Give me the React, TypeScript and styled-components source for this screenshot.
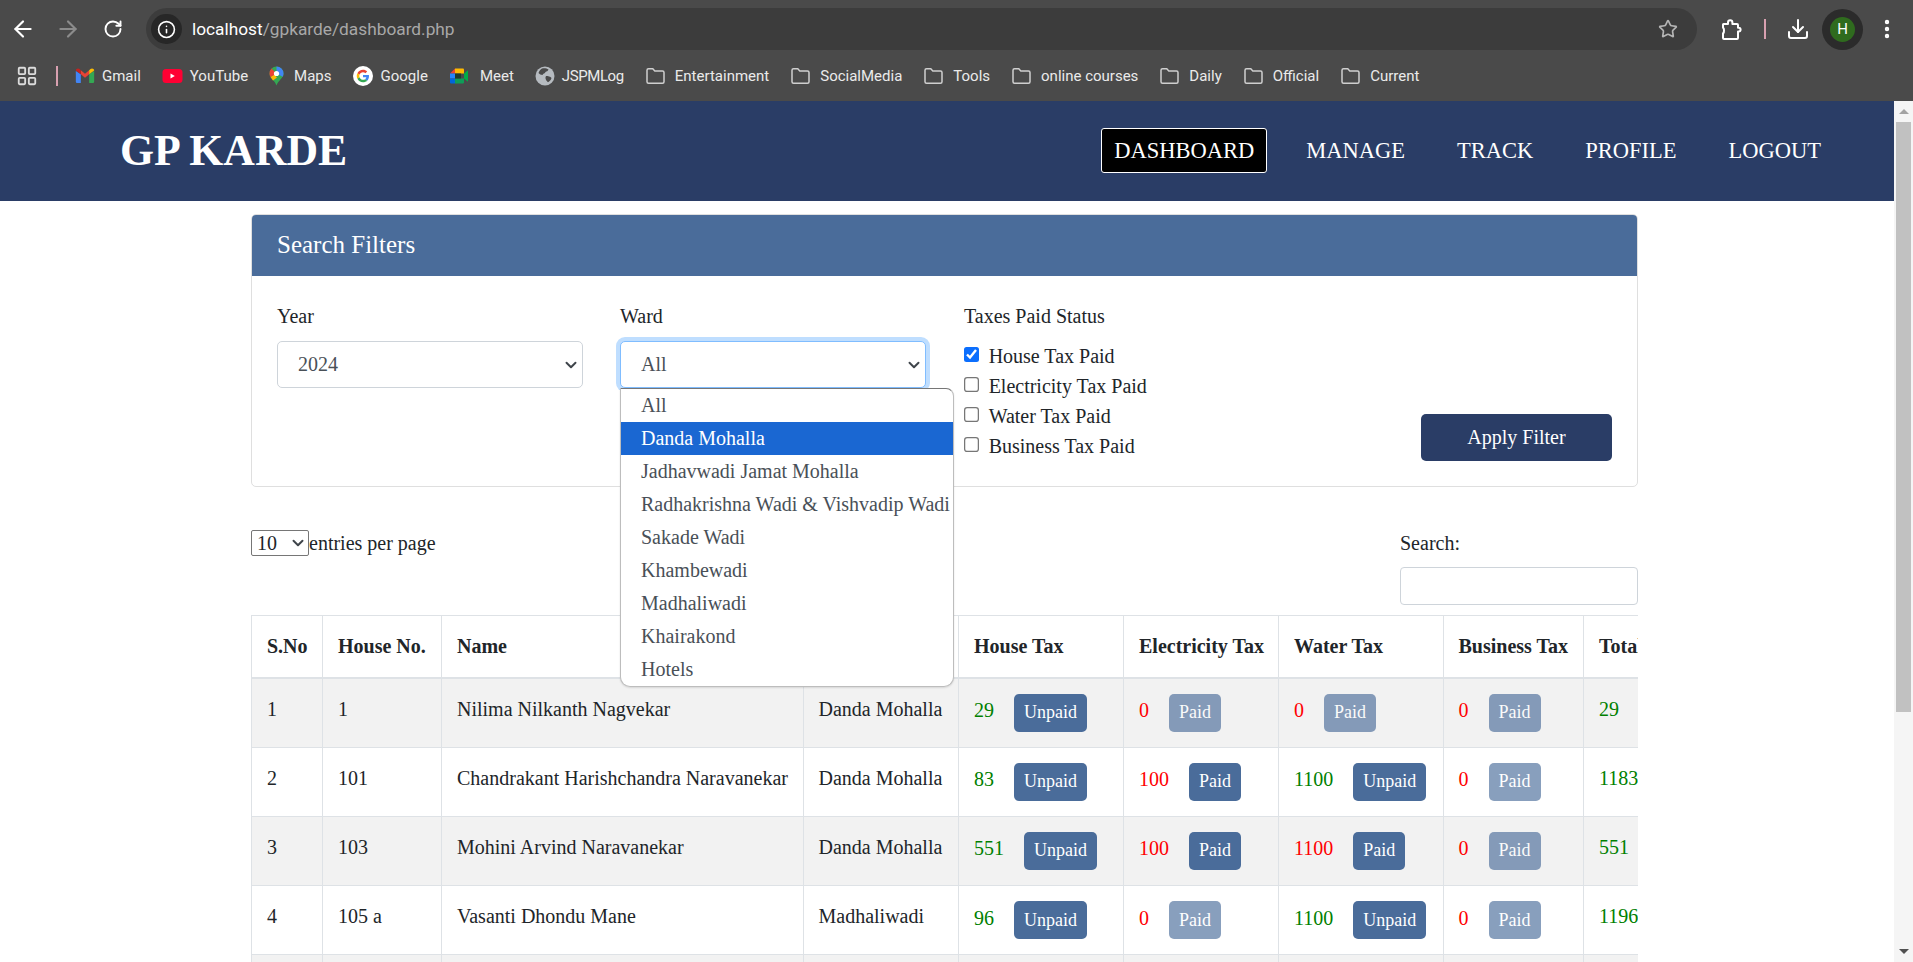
import React from 'react';
import styled, { createGlobalStyle } from 'styled-components';
import { ArrowLeft, ArrowRight, ChevronDown, Download, EllipsisVertical, Info, LayoutGrid, RotateCw, Star } from 'lucide-react';

const GlobalStyle = createGlobalStyle`
  html, body {
    margin: 0;
    height: 100%;
    overflow: hidden;
    background: #fff;
    font-family: "Liberation Serif", "Times New Roman", serif;
    color: #212529;
  }
  * { box-sizing: border-box; }
`;

const wards = [
  'All',
  'Danda Mohalla',
  'Jadhavwadi Jamat Mohalla',
  'Radhakrishna Wadi & Vishvadip Wadi',
  'Sakade Wadi',
  'Khambewadi',
  'Madhaliwadi',
  'Khairakond',
  'Hotels',
];

const taxChecks = [
  { label: 'House Tax Paid', checked: true },
  { label: 'Electricity Tax Paid', checked: false },
  { label: 'Water Tax Paid', checked: false },
  { label: 'Business Tax Paid', checked: false },
];

const columns = [
  { title: 'S.No', width: 71 },
  { title: 'House No.', width: 119 },
  { title: 'Name', width: 361.5 },
  { title: 'Ward', width: 155.5 },
  { title: 'House Tax', width: 165 },
  { title: 'Electricity Tax', width: 155 },
  { title: 'Water Tax', width: 164.5 },
  { title: 'Business Tax', width: 140.5 },
  { title: 'Total', width: 100 },
];

type Tax = { amount: number; paid: boolean; action: 'Paid' | 'Unpaid'; faded?: boolean };

const due = (amount: number): Tax => ({ amount, paid: true, action: 'Unpaid' });
const late = (amount: number): Tax => ({ amount, paid: false, action: 'Paid' });
const none: Tax = { amount: 0, paid: false, action: 'Paid', faded: true };

const rows = [
  { no: 1, house: '1', name: 'Nilima Nilkanth Nagvekar', ward: 'Danda Mohalla', taxes: [due(29), none, none, none], total: 29 },
  { no: 2, house: '101', name: 'Chandrakant Harishchandra Naravanekar', ward: 'Danda Mohalla', taxes: [due(83), late(100), due(1100), none], total: 1183 },
  { no: 3, house: '103', name: 'Mohini Arvind Naravanekar', ward: 'Danda Mohalla', taxes: [due(551), late(100), late(1100), none], total: 551 },
  { no: 4, house: '105 a', name: 'Vasanti Dhondu Mane', ward: 'Madhaliwadi', taxes: [due(96), none, due(1100), none], total: 1196 },
];

const bookmarks = [
  { icon: <GmailIcon />, label: 'Gmail', gap: 7, track: 0 },
  { icon: <YouTubeIcon />, label: 'YouTube', gap: 7, track: 0 },
  { icon: <MapsIcon />, label: 'Maps', gap: 10, track: 0 },
  { icon: <GoogleIcon />, label: 'Google', gap: 8, track: 0 },
  { icon: <MeetIcon />, label: 'Meet', gap: 11, track: 0 },
  { icon: <GlobeIcon />, label: 'JSPMLog', gap: 7, track: -0.4 },
];

const folders = ['Entertainment', 'SocialMedia', 'Tools', 'online courses', 'Daily', 'Official', 'Current'];

function GmailIcon() {
  return (
    <svg width="20" height="20" viewBox="0 0 24 24">
      <path fill="#4285F4" d="M1 6v13a1.5 1.5 0 0 0 1.5 1.5H7V10z" />
      <path fill="#34A853" d="M17 10v10.5h4.5A1.5 1.5 0 0 0 23 19V6z" />
      <path fill="#EA4335" d="M7 10V5l5 4.2L17 5v5l-5 4.2z" />
      <path fill="#FBBC04" d="M17 5v5l6-4.5c0-2.4-2.6-3.4-4.400-2z" />
      <path fill="#C5221F" d="M7 5v5L1 5.500c0-2.400 2.600-3.400 4.400-2z" />
    </svg>
  );
}

function YouTubeIcon() {
  return (
    <svg width="21" height="20" viewBox="0 0 21 20">
      <rect x="0.5" y="3" width="20" height="14" rx="3.500" fill="#FF0033" />
      <path fill="#fff" d="M8.500 7.500v5l4.300-2.500z" />
    </svg>
  );
}

function MapsIcon() {
  return (
    <svg width="15" height="20" viewBox="0 0 15 20">
      <path fill="#34A853" d="M7.500 0.500A7 7 0 0 0 .5 7.500c0 4.800 5.300 6.700 7 12 1.700-5.300 7-7.200 7-12a7 7 0 0 0-7-7z" />
      <path fill="#FBBC04" d="M1.500 11L5 8.500l3 3-4 3z" />
      <path fill="#4285F4" d="M7.500.5a7 7 0 0 1 7 7c0 1.200-.3 2.200-.8 3.200L7.500 7.500z" />
      <path fill="#EA4335" d="M2.500 2.500a7 7 0 0 0-2 5c0 1.300.3 2.400 1 3.500L7.500 7.500z" />
      <circle cx="7.500" cy="7.500" r="2.600" fill="#fff" />
    </svg>
  );
}

function GoogleIcon() {
  return (
    <svg width="20" height="20" viewBox="0 0 48 48">
      <circle cx="24" cy="24" r="24" fill="#fff" />
      <g transform="translate(9 9) scale(.625)">
        <path fill="#EA4335" d="M24 9.500c3.540 0 6.710 1.220 9.210 3.600l6.850-6.850C35.900 2.380 30.470 0 24 0 14.620 0 6.510 5.380 2.560 13.220l7.980 6.190C12.430 13.720 17.740 9.500 24 9.500z" />
        <path fill="#4285F4" d="M46.980 24.550c0-1.570-.15-3.090-.38-4.550H24v9.020h12.940c-.58 2.960-2.260 5.480-4.780 7.180l7.730 6c4.510-4.180 7.090-10.360 7.090-17.650z" />
        <path fill="#FBBC05" d="M10.530 28.590c-.48-1.450-.76-2.990-.76-4.590s.27-3.140.76-4.590l-7.980-6.190C.92 16.460 0 20.120 0 24c0 3.880.92 7.540 2.560 10.780l7.970-6.190z" />
        <path fill="#34A853" d="M24 48c6.480 0 11.930-2.130 15.890-5.810l-7.730-6c-2.150 1.450-4.920 2.300-8.160 2.300-6.260 0-11.570-4.220-13.470-9.910l-7.980 6.190C6.510 42.620 14.620 48 24 48z" />
      </g>
    </svg>
  );
}

function MeetIcon() {
  return (
    <svg width="20" height="20" viewBox="0 0 20 20">
      <path fill="#EA4335" d="M6 2.500L1 7.500h5z" />
      <path fill="#FFBA00" d="M6 2.500h8a1 1 0 0 1 1 1v4H6z" />
      <path fill="#2684FC" d="M1 7.500h5v5H1z" />
      <path fill="#0066DA" d="M1 12.500h5v5H2a1 1 0 0 1-1-1z" />
      <path fill="#0F9D58" d="M6 12.500h9v4a1 1 0 0 1-1 1H6z" />
      <path fill="#00AC47" d="M15 7.500v5l4 3.200V4.300z" />
      <path fill="#1E3A2C" d="M6 7.500h6v5H6z" />
    </svg>
  );
}

function GlobeIcon() {
  return (
    <svg width="20" height="20" viewBox="0 0 20 20">
      <circle cx="10" cy="10" r="9.500" fill="#B6BBC0" />
      <path fill="#4A4A4A" d="M7 2.500c2.500-.5 5 0 6.500 1-.5 1.500-2 2-3 2.500-.5 1.500-2.500 1.500-3 3-1.500 0-3-.8-4-2 .8-2 2-3.800 3.500-4.500zM11 10c2 0 4.500.5 5.500 2-.5 2-2 3.500-3.500 4.300-1.500-1.300-3.500-3.800-2-6.300z" />
    </svg>
  );
}

function FolderIcon() {
  return (
    <svg width="21" height="20" viewBox="0 0 21 20" fill="none" stroke="#CFCFCF" strokeWidth="1.500">
      <path d="M2 4.200a1.500 1.500 0 0 1 1.500-1.500h4.300l2 2.200h7.700a1.500 1.500 0 0 1 1.500 1.500v9.400a1.500 1.500 0 0 1-1.500 1.500h-14A1.500 1.500 0 0 1 2 15.800z" />
    </svg>
  );
}

function PuzzleIcon() {
  return (
    <svg width="21" height="21" viewBox="0 0 21 21" fill="none" stroke="#fff" strokeWidth="2" strokeLinejoin="round">
      <path d="M2.500 5h4.500V3.500a2.200 2.200 0 0 1 4.400 0V5h4.600a1 1 0 0 1 1 1v2.700h.7a1.900 1.900 0 0 1 0 3.800H17V19a1 1 0 0 1-1 1H3a1 1 0 0 1-1-1v-4.500a3.900 3.900 0 0 0 1-3 3.900 3.900 0 0 0-1-3V5.500a.5.5 0 0 1 .5-.5z" />
    </svg>
  );
}

export default function App() {
  return (
    <Shell>
      <GlobalStyle />
      <BrowserBar>
        <Toolbar>
          <NavButton><ArrowLeft size={26} color="#fff" strokeWidth={2} /></NavButton>
          <NavButton><ArrowRight size={26} color="#8c8c8c" strokeWidth={2} /></NavButton>
          <NavButton><RotateCw size={20} color="#fff" strokeWidth={2.3} /></NavButton>
          <Omnibox>
            <SiteChip><Info size={19} color="#fff" strokeWidth={2} /></SiteChip>
            <UrlText>localhost<UrlPath>/gpkarde/dashboard.php</UrlPath></UrlText>
            <Star size={20} color="#b4b4b4" strokeWidth={2} />
          </Omnibox>
          <ToolSlot $left={22}><PuzzleIcon /></ToolSlot>
          <PinkRule $left={21} $height={20} />
          <ToolSlot $left={20}><Download size={26} color="#fff" strokeWidth={2} /></ToolSlot>
          <AvatarRing><Avatar>H</Avatar></AvatarRing>
          <ToolSlot $left={12}><EllipsisVertical size={24} color="#fff" strokeWidth={2.4} /></ToolSlot>
        </Toolbar>
        <BookmarksBar>
          <AppsSlot><LayoutGrid size={22} color="#dcdcdc" strokeWidth={2} /></AppsSlot>
          <PinkRule $left={17} $height={20} />
          <BookmarkList>
            {bookmarks.map((b) => (
              <Bookmark key={b.label} $gap={b.gap} $track={b.track}>{b.icon}{b.label}</Bookmark>
            ))}
            {folders.map((f) => (
              <Bookmark key={f} $gap={9}><FolderIcon />{f}</Bookmark>
            ))}
          </BookmarkList>
        </BookmarksBar>
      </BrowserBar>

      <Viewport>
        <Page>
          <SiteHeader>
            <Logo>GP KARDE</Logo>
            <Nav>
              <NavLink $active>DASHBOARD</NavLink>
              <NavLink>MANAGE</NavLink>
              <NavLink>TRACK</NavLink>
              <NavLink>PROFILE</NavLink>
              <NavLink>LOGOUT</NavLink>
            </Nav>
          </SiteHeader>

          <Content>
            <FilterCard>
              <CardTitle>Search Filters</CardTitle>
              <CardBody>
                <Field>
                  <FieldLabel>Year</FieldLabel>
                  <SelectWrap>
                    <FormSelect defaultValue="2024">
                      <option>2024</option>
                    </FormSelect>
                    <SelectChevron size={18} strokeWidth={2.6} $right={3} />
                  </SelectWrap>
                </Field>
                <Field>
                  <FieldLabel>Ward</FieldLabel>
                  <SelectWrap>
                    <FormSelect $focused defaultValue="All">
                      <option>All</option>
                    </FormSelect>
                    <SelectChevron size={18} strokeWidth={2.6} $right={3} />
                  </SelectWrap>
                  <WardMenu>
                    {wards.map((w, i) => (
                      <WardOption key={w} $highlighted={i === 1}>{w}</WardOption>
                    ))}
                  </WardMenu>
                </Field>
                <StatusGroup>
                  <FieldLabel>Taxes Paid Status</FieldLabel>
                  {taxChecks.map((c) => (
                    <CheckRow key={c.label}>
                      <CheckBox type="checkbox" defaultChecked={c.checked} />
                      {c.label}
                    </CheckRow>
                  ))}
                </StatusGroup>
                <ApplyButton>Apply Filter</ApplyButton>
              </CardBody>
            </FilterCard>

            <TableControls>
              <EntriesLabel>
                <SelectWrap>
                  <EntriesSelect defaultValue="10">
                    <option>10</option>
                  </EntriesSelect>
                  <SelectChevron size={18} strokeWidth={2.6} $right={2} />
                </SelectWrap>
                entries per page
              </EntriesLabel>
              <SearchBox>
                Search:
                <SearchInput type="text" />
              </SearchBox>
            </TableControls>

            <TableClip>
              <DataTable>
                <colgroup>
                  {columns.map((c) => (
                    <col key={c.title} style={{ width: c.width }} />
                  ))}
                </colgroup>
                <thead>
                  <tr>
                    {columns.map((c) => (
                      <HeadCell key={c.title}>{c.title}</HeadCell>
                    ))}
                  </tr>
                </thead>
                <tbody>
                  {rows.map((r) => (
                    <DataRow key={r.no}>
                      <Cell>{r.no}</Cell>
                      <Cell>{r.house}</Cell>
                      <Cell>{r.name}</Cell>
                      <Cell>{r.ward}</Cell>
                      {r.taxes.map((t, i) => (
                        <Cell key={i}>
                          <TaxAmount $paid={t.paid}>{t.amount}</TaxAmount>
                          <PayButton $faded={t.faded}>{t.action}</PayButton>
                        </Cell>
                      ))}
                      <Cell><Amount $paid>{r.total}</Amount></Cell>
                    </DataRow>
                  ))}
                  <DataRow>
                    {columns.map((c) => (
                      <Cell key={c.title} />
                    ))}
                  </DataRow>
                </tbody>
              </DataTable>
            </TableClip>
          </Content>
        </Page>
        <ScrollRail>
          <ScrollCap><ArrowUpShape /></ScrollCap>
          <ScrollThumb />
          <ScrollCap><ArrowDownShape /></ScrollCap>
        </ScrollRail>
      </Viewport>
    </Shell>
  );
}

const Shell = styled.div`
  height: 100vh;
  display: flex;
  flex-direction: column;
`;

const BrowserBar = styled.div`
  flex: none;
  height: 101px;
  background: #4a4a4a;
  font-family: Roboto, "Noto Sans", sans-serif;
`;

const Toolbar = styled.div`
  height: 58px;
  display: flex;
  align-items: center;
`;

const NavButton = styled.div`
  width: 45px;
  height: 42px;
  display: flex;
  align-items: center;
  justify-content: center;
`;

const Omnibox = styled.div`
  width: 1551px;
  height: 42px;
  margin-left: 11px;
  padding: 0 19px 0 5px;
  border-radius: 21px;
  background: #3c3c3c;
  display: flex;
  align-items: center;
`;

const SiteChip = styled.div`
  width: 31px;
  height: 30px;
  border-radius: 15px;
  background: #272727;
  display: flex;
  align-items: center;
  justify-content: center;
`;

const UrlText = styled.div`
  flex: 1;
  margin-left: 10px;
  font-size: 17.3px;
  color: #fff;
`;

const UrlPath = styled.span`
  color: #a8a8a8;
`;

const ToolSlot = styled.div<{ $left: number }>`
  width: 24px;
  height: 24px;
  margin-left: ${(p) => p.$left}px;
  display: flex;
  align-items: center;
  justify-content: center;
`;

const PinkRule = styled.div<{ $left: number; $height: number }>`
  width: 2px;
  height: ${(p) => p.$height}px;
  margin-left: ${(p) => p.$left}px;
  background: #d8a0b0;
`;

const AvatarRing = styled.div`
  width: 41px;
  height: 41px;
  margin-left: 12px;
  border-radius: 50%;
  background: #2b2b2b;
  display: flex;
  align-items: center;
  justify-content: center;
`;

const Avatar = styled.div`
  width: 25px;
  height: 25px;
  border-radius: 50%;
  background: #2f6b1e;
  color: #fff;
  font-size: 15px;
  display: flex;
  align-items: center;
  justify-content: center;
`;

const BookmarksBar = styled.div`
  height: 36px;
  display: flex;
  align-items: center;
`;

const AppsSlot = styled.div`
  width: 24px;
  height: 24px;
  margin-left: 15px;
  display: flex;
  align-items: center;
  justify-content: center;
`;

const BookmarkList = styled.div`
  margin-left: 17px;
  display: flex;
  align-items: center;
  gap: 21px;
`;

const Bookmark = styled.div<{ $gap: number; $track?: number }>`
  display: flex;
  align-items: center;
  gap: ${(p) => p.$gap}px;
  font-size: 15px;
  letter-spacing: ${(p) => p.$track ?? 0}px;
  color: #eaeaea;
  white-space: nowrap;
`;

const Viewport = styled.div`
  flex: 1;
  min-height: 0;
  display: flex;
`;

const Page = styled.div`
  flex: 1;
  min-width: 0;
  overflow: hidden;
`;

const ScrollRail = styled.aside`
  flex: none;
  width: 19px;
  background: #f5f5f5;
  display: flex;
  flex-direction: column;
  justify-content: space-between;
`;

const ScrollCap = styled.div`
  height: 21px;
  display: flex;
  align-items: center;
  justify-content: center;
`;

const ArrowUpShape = styled.div`
  width: 0;
  height: 0;
  border-left: 5px solid transparent;
  border-right: 5px solid transparent;
  border-bottom: 5px solid #a3a3a3;
`;

const ArrowDownShape = styled.div`
  width: 0;
  height: 0;
  border-left: 5px solid transparent;
  border-right: 5px solid transparent;
  border-top: 5px solid #505050;
`;

const ScrollThumb = styled.div`
  height: 590px;
  margin: 0 2px 229px;
  background: #c1c1c1;
`;

const SiteHeader = styled.header`
  height: 100px;
  padding: 0 60px 0 120px;
  background: #2a3d66;
  color: #fff;
  display: flex;
  align-items: center;
  justify-content: space-between;
`;

const Logo = styled.div`
  padding-bottom: 2px;
  font-size: 43.75px;
  font-weight: 700;
`;

const Nav = styled.nav`
  display: flex;
  align-items: center;
  gap: 26px;
  margin-bottom: 1px;
`;

const NavLink = styled.a<{ $active?: boolean }>`
  height: 45px;
  padding: 0 12px;
  font-size: 22.5px;
  display: flex;
  align-items: center;
  border: 1px solid ${(p) => (p.$active ? '#fff' : 'transparent')};
  border-radius: 3px;
  background: ${(p) => (p.$active ? '#000' : 'transparent')};
`;

const Content = styled.main`
  width: 1387px;
  margin: 13px 0 0 251px;
  font-size: 20px;
  line-height: 30px;
`;

const FilterCard = styled.section`
  height: 273px;
  border: 1px solid #dfdfdf;
  border-radius: 5px;
`;

const CardTitle = styled.div`
  height: 61px;
  padding: 0 25px 2px;
  border-radius: 4px 4px 0 0;
  background: #4a6c9a;
  color: #fff;
  font-size: 25px;
  display: flex;
  align-items: center;
`;

const CardBody = styled.div`
  height: 210px;
  padding: 25px;
  display: flex;
  align-items: flex-start;
`;

const Field = styled.div`
  position: relative;
  width: 306px;
  margin-right: 37px;
`;

const FieldLabel = styled.div`
  margin-bottom: 10px;
`;

const SelectWrap = styled.div`
  position: relative;
  line-height: 0;
`;

const SelectChevron = styled(ChevronDown)<{ $right: number }>`
  position: absolute;
  top: 50%;
  right: ${(p) => p.$right}px;
  transform: translateY(-50%);
  color: #3f454b;
  pointer-events: none;
`;

const FormSelect = styled.select<{ $focused?: boolean }>`
  appearance: none;
  display: block;
  width: 100%;
  height: 47px;
  padding: 0 20px 2px;
  font-family: inherit;
  font-size: 20px;
  color: #495057;
  background-color: #fff;
  border: 1px solid ${(p) => (p.$focused ? '#80bdff' : '#ced4da')};
  border-radius: 5px;
  outline: none;
  box-shadow: ${(p) => (p.$focused ? '0 0 0 4px #bfdeff' : 'none')};
`;

const WardMenu = styled.div`
  position: absolute;
  z-index: 5;
  left: 0;
  top: 87px;
  width: 334px;
  border: 1px solid #bdbdbd;
  border-top-color: #767676;
  border-radius: 0 8px 10px 10px;
  background: #fff;
  overflow: hidden;
  box-shadow: 0 1px 2px rgba(0, 0, 0, 0.12);
`;

const WardOption = styled.div<{ $highlighted?: boolean }>`
  height: 33px;
  padding-left: 20px;
  line-height: 33px;
  white-space: nowrap;
  color: ${(p) => (p.$highlighted ? '#fff' : '#495057')};
  background: ${(p) => (p.$highlighted ? '#1a67d2' : 'transparent')};
`;

const StatusGroup = styled.div`
  margin-left: 1px;
  display: flex;
  flex-direction: column;
`;

const CheckRow = styled.label`
  height: 30px;
  display: flex;
  align-items: center;
  gap: 9px;
  white-space: nowrap;
`;

const CheckBox = styled.input`
  zoom: 1.25;
  width: 12.5px;
  height: 12.5px;
  margin: -1.5px 0 0;
  accent-color: #0b6efd;
`;

const ApplyButton = styled.button`
  width: 191px;
  height: 47px;
  margin: auto 0 0 auto;
  border: none;
  border-radius: 5px;
  background: #2a3d66;
  color: #fff;
  font-family: inherit;
  font-size: 20px;
`;

const TableControls = styled.div`
  margin-top: 41px;
  display: flex;
  justify-content: space-between;
  align-items: flex-start;
`;

const EntriesLabel = styled.label`
  display: flex;
  align-items: center;
  height: 30px;
`;

const EntriesSelect = styled.select`
  appearance: none;
  display: block;
  width: 58px;
  height: 26px;
  padding: 0 0 0 5px;
  font-family: inherit;
  font-size: 20px;
  color: #212529;
  background: #fff;
  border: 1px solid #767676;
  border-radius: 2px;
`;

const SearchBox = styled.label`
  width: 238px;
  display: flex;
  flex-direction: column;
  gap: 9px;
`;

const SearchInput = styled.input`
  height: 38px;
  border: 1px solid #ced4da;
  border-radius: 4px;
  outline: none;
`;

const TableClip = styled.div`
  margin-top: 10px;
  overflow: hidden;
`;

const DataTable = styled.table`
  width: 1432px;
  table-layout: fixed;
  border-collapse: collapse;
`;

const HeadCell = styled.th`
  height: 62px;
  padding: 0 15px;
  text-align: left;
  white-space: nowrap;
  border: 1px solid #dee2e6;
  border-bottom-width: 2px;
`;

const DataRow = styled.tr`
  height: 69.25px;
  &:nth-child(odd) {
    background: #f2f2f2;
  }
`;

const Cell = styled.td`
  padding: 15px;
  vertical-align: top;
  white-space: nowrap;
  border: 1px solid #dee2e6;
`;

const Amount = styled.span<{ $paid: boolean }>`
  color: ${(p) => (p.$paid ? '#008000' : '#ff0000')};
`;

const TaxAmount = styled(Amount)`
  position: relative;
  top: 1.5px;
`;

const PayButton = styled.button<{ $faded?: boolean }>`
  height: 38px;
  margin-left: 20px;
  padding: 0 10px;
  vertical-align: top;
  border: none;
  border-radius: 5px;
  background: #4a6c9a;
  color: #fff;
  font-family: inherit;
  font-size: 18px;
  opacity: ${(p) => (p.$faded ? 0.65 : 1)};
`;
